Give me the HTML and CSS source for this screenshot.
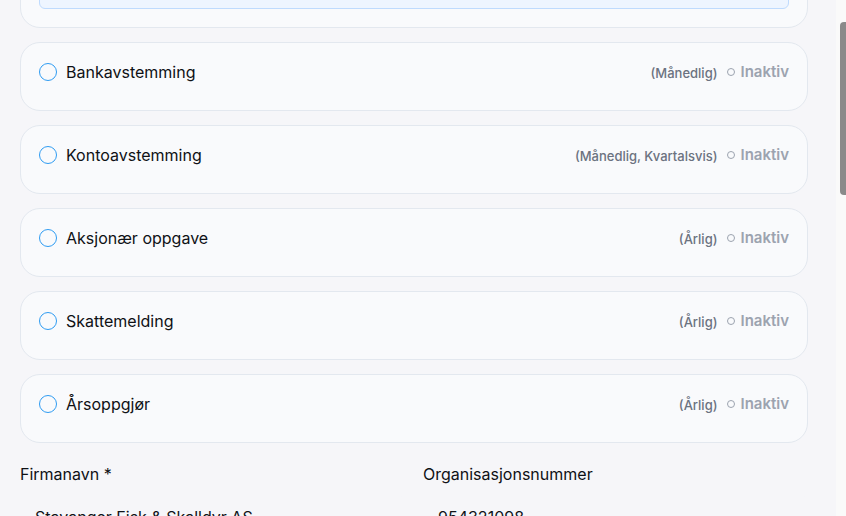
FILE: index.html
```html
<!DOCTYPE html>
<html lang="no">
<head>
<meta charset="utf-8">
<title>Oppgaver</title>
<link rel="stylesheet" href="styles.css">
</head>
<body>
<div class="app">
  <main class="content">
    <div class="scrolled">
      <section class="card card-top">
        <div class="info-box"></div>
      </section>

      <section class="card task">
        <div class="task-left"><span class="radio"></span><span class="task-name">Bankavstemming</span></div>
        <div class="task-right"><span class="freq">(Månedlig)</span><span class="status"><span class="dot"></span>Inaktiv</span></div>
      </section>

      <section class="card task">
        <div class="task-left"><span class="radio"></span><span class="task-name">Kontoavstemming</span></div>
        <div class="task-right"><span class="freq">(Månedlig, Kvartalsvis)</span><span class="status"><span class="dot"></span>Inaktiv</span></div>
      </section>

      <section class="card task">
        <div class="task-left"><span class="radio"></span><span class="task-name">Aksjonær oppgave</span></div>
        <div class="task-right"><span class="freq">(Årlig)</span><span class="status"><span class="dot"></span>Inaktiv</span></div>
      </section>

      <section class="card task">
        <div class="task-left"><span class="radio"></span><span class="task-name">Skattemelding</span></div>
        <div class="task-right"><span class="freq">(Årlig)</span><span class="status"><span class="dot"></span>Inaktiv</span></div>
      </section>

      <section class="card task">
        <div class="task-left"><span class="radio"></span><span class="task-name">Årsoppgjør</span></div>
        <div class="task-right"><span class="freq">(Årlig)</span><span class="status"><span class="dot"></span>Inaktiv</span></div>
      </section>

      <div class="form-grid">
        <div class="field">
          <label class="label">Firmanavn *</label>
          <div class="input">Stavanger Fisk &amp; Skalldyr AS</div>
        </div>
        <div class="field">
          <label class="label">Organisasjonsnummer</label>
          <div class="input">954321098</div>
        </div>
      </div>
    </div>
  </main>
  <div class="scrollbar"><div class="thumb"></div></div>
</div>
</body>
</html>
```
FILE: styles.css
```css
* { box-sizing: border-box; }
html, body { margin: 0; padding: 0; height: 100%; overflow: hidden; }
body {
  background: #f6f6f9;
  font-family: Inter, "Noto Sans", sans-serif;
  color: #111318;
}
.app { display: flex; height: 516px; }
.content { flex: 1; overflow: hidden; padding: 0 28px 0 20px; }
.scrolled { margin-top: -72px; display: flex; flex-direction: column; gap: 14px; }
.scrollbar { width: 10px; background: #fafafa; padding-top: 22px; padding-left: 4px; }
.thumb { height: 173px; background: #8a8a8a; border-radius: 4px 0 0 4px; }

.card {
  background: #f9fafc;
  border: 1px solid #e3e8ef;
  border-radius: 20px;
}
.card-top { padding: 18px; height: 100px; display: flex; flex-direction: column; justify-content: flex-end; }
.info-box { height: 60px; background: #eef5ff; border: 1px solid #bfdbfe; border-radius: 6px; }

.task {
  height: 69px;
  padding: 17px 18px 0 18px;
  display: flex;
  justify-content: space-between;
  align-items: flex-start;
}
.task-left { display: flex; align-items: center; gap: 9px; height: 24px; }
.radio {
  width: 18px; height: 18px;
  border: 1.6px solid #2f9cf2;
  border-radius: 50%;
  flex: none;
}
.task-name { font-size: 16px; font-weight: 400; line-height: 24px; color: #0f1115; }
.task-right { display: flex; align-items: center; gap: 10px; height: 22px; }
.freq { font-size: 13px; font-weight: 500; color: #6b7280; margin-top: 4px; }
.status { display: flex; align-items: center; gap: 5px; font-size: 15px; font-weight: 600; color: #9ca3af; }
.dot { width: 8px; height: 8px; border: 1px solid #9ca3af; border-radius: 50%; margin-top: 2px; }

.form-grid {
  display: grid;
  grid-template-columns: 1fr 1fr;
  column-gap: 18px;
  margin-top: 6px;
}
.field { display: flex; flex-direction: column; gap: 9px; }
.label { font-size: 16px; font-weight: 400; line-height: 22px; color: #0f1115; }
.input {
  height: 44px;
  padding: 12px 14px;
  font-size: 16px;
  line-height: 20px;
  border: 1px solid #f6f6f9;
  background: #f6f6f9;
  border-radius: 8px;
}
```
